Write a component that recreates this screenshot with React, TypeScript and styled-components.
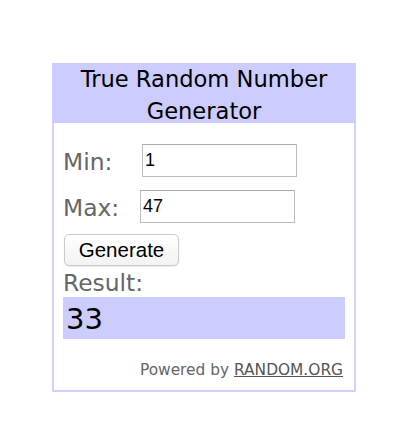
import React from "react";
import styled, { createGlobalStyle } from "styled-components";

const GlobalStyle = createGlobalStyle`
  html, body {
    margin: 0;
    padding: 0;
    background: #ffffff;
  }
`;

const Page = styled.div`
  padding: 63px 0 0 52px;
  min-height: 427px;
  box-sizing: border-box;
`;

const Widget = styled.div`
  width: 304px;
  box-sizing: border-box;
  border: 2px solid #d2d2ff;
  border-top: none;
  font-family: "DejaVu Sans", Verdana, sans-serif;
`;

const Header = styled.div`
  height: 60px;
  margin: 0 -2px;
  background: #ccccff;
  color: #000000;
  font-size: 22.6px;
  line-height: 32px;
  text-align: center;
`;

const Body = styled.div`
  display: flex;
  flex-direction: column;
  padding: 21px 9px 10px 9px;
`;

const Field = styled.div<{ $gap?: number }>`
  display: flex;
  align-items: center;
  height: 33px;
  margin-bottom: ${(p) => p.$gap ?? 0}px;
`;

const Label = styled.label<{ $width: number }>`
  width: ${(p) => p.$width}px;
  flex: none;
  color: #666666;
  font-size: 23.4px;
  line-height: 26px;
  padding-top: 2px;
`;

const Input = styled.input`
  width: 155px;
  height: 33px;
  box-sizing: border-box;
  border: 1px solid #bdbdbd;
  border-top-color: #a9a9a9;
  padding: 0 2px;
  font-family: "Liberation Sans", Arial, sans-serif;
  font-size: 18px;
  color: #000000;
  background: #ffffff;
  outline: none;
`;

const Button = styled.button`
  align-self: flex-start;
  width: 115px;
  height: 32px;
  margin: 11px 0 0 1px;
  padding: 0;
  border: 1px solid #c9c9c9;
  border-radius: 5px;
  background: linear-gradient(#ffffff, #f3f3f3);
  box-shadow: 0 1px 1px rgba(0, 0, 0, 0.08);
  font-family: "Liberation Sans", Arial, sans-serif;
  font-size: 20.5px;
  color: #000000;
`;

const ResultLabel = styled.div`
  margin-top: 4px;
  color: #666666;
  font-size: 23.4px;
  line-height: 26px;
`;

const ResultValue = styled.div`
  margin-top: 1px;
  height: 42px;
  padding-left: 3px;
  background: #ccccff;
  color: #000000;
  font-size: 29px;
  line-height: 44px;
`;

const Footer = styled.div`
  margin-top: 21px;
  text-align: right;
  padding-right: 2px;
  color: #666666;
  font-size: 15.4px;
  line-height: 20px;
`;

const FooterLink = styled.a`
  color: #555555;
  text-decoration: underline;
`;

export default function App() {
  return (
    <>
      <GlobalStyle />
      <Page>
        <Widget>
          <Header>
            True Random Number
            <br />
            Generator
          </Header>
          <Body>
            <Field $gap={13}>
              <Label $width={79}>Min:</Label>
              <Input defaultValue="1" />
            </Field>
            <Field>
              <Label $width={77}>Max:</Label>
              <Input defaultValue="47" />
            </Field>
            <Button type="button">Generate</Button>
            <ResultLabel>Result:</ResultLabel>
            <ResultValue>33</ResultValue>
            <Footer>
              Powered by <FooterLink>RANDOM.ORG</FooterLink>
            </Footer>
          </Body>
        </Widget>
      </Page>
    </>
  );
}
